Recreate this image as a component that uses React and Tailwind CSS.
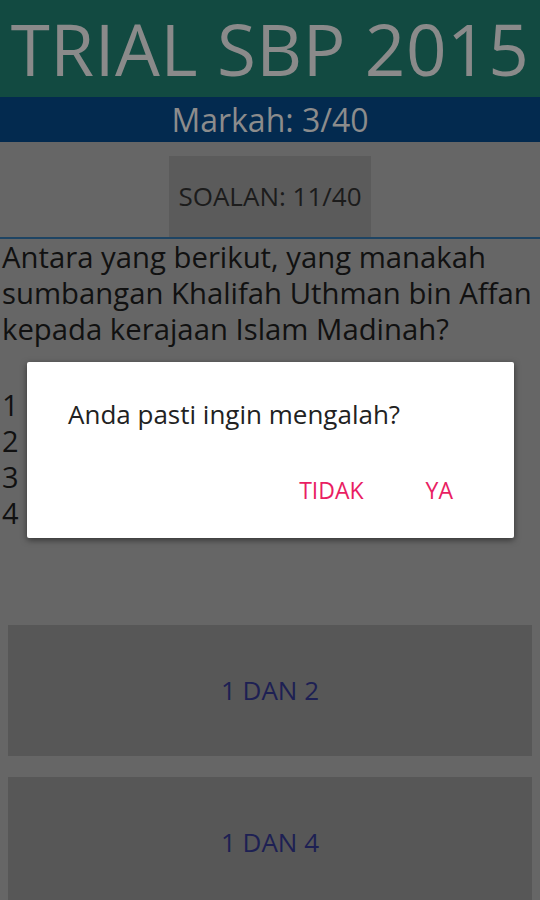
const font = { fontFamily: '"Open Sans", "Noto Sans", sans-serif' }

const options = ['1', '2', '3', '4']
const answers = ['1 DAN 2', '1 DAN 4']

export default function App() {
  return (
    <div className="relative w-[540px] h-[900px] overflow-hidden bg-[#666666]" style={font}>
      {/* title */}
      <div className="h-[97px] bg-[#124a41] flex items-center justify-center">
        <h1 className="text-[71px] leading-none text-[#8a8a8a] tracking-[0.5px]">TRIAL SBP 2015</h1>
      </div>
      <div className="h-[45px] bg-[#032a4f] flex items-center justify-center">
        <p className="text-[32px] leading-none text-[#8c8c8c]">Markah: 3/40</p>
      </div>

      <div className="flex pt-[14px] pl-[169px]">
        <div className="w-[202px] h-[81px] bg-[#5b5b5b] flex items-center justify-center">
          <span className="text-[26px] text-[#1c1c1c]">SOALAN: 11/40</span>
        </div>
      </div>
      <div className="h-[2px] bg-[#1e4463]" />

      <p className="pl-[2px] text-[29.3px] leading-[36px] text-[#111111]">
        Antara yang berikut, yang manakah sumbangan Khalifah Uthman bin Affan kepada kerajaan Islam Madinah?
      </p>

      <ul className="mt-[40px] px-[2px] text-[29px] leading-[36px] text-[#111111]">
        {options.map(o => <li key={o}>{o}</li>)}
      </ul>

      <div className="mt-[94px] px-[8px] flex flex-col gap-[21px]">
        {answers.map(a => (
          <div key={a} className="h-[131px] bg-[#575757] flex items-center justify-center">
            <span className="text-[26px] text-[#1d2053]">{a}</span>
          </div>
        ))}
      </div>

      {/* dialog */}
      <div className="absolute left-[27px] top-[362px] w-[487px] h-[176px] bg-white rounded-[2px] shadow-[0_2px_6px_rgba(0,0,0,0.5)] flex flex-col">
        <p className="pl-[41px] pt-[36px] text-[26px] leading-[32px] text-[#222222]">Anda pasti ingin mengalah?</p>
        <div className="mt-auto mb-[36px] flex justify-end gap-[62px] pr-[61px]">
          <button className="text-[23px] leading-none text-[#e91e63]">TIDAK</button>
          <button className="text-[23px] leading-none text-[#e91e63]">YA</button>
        </div>
      </div>
    </div>
  )
}
